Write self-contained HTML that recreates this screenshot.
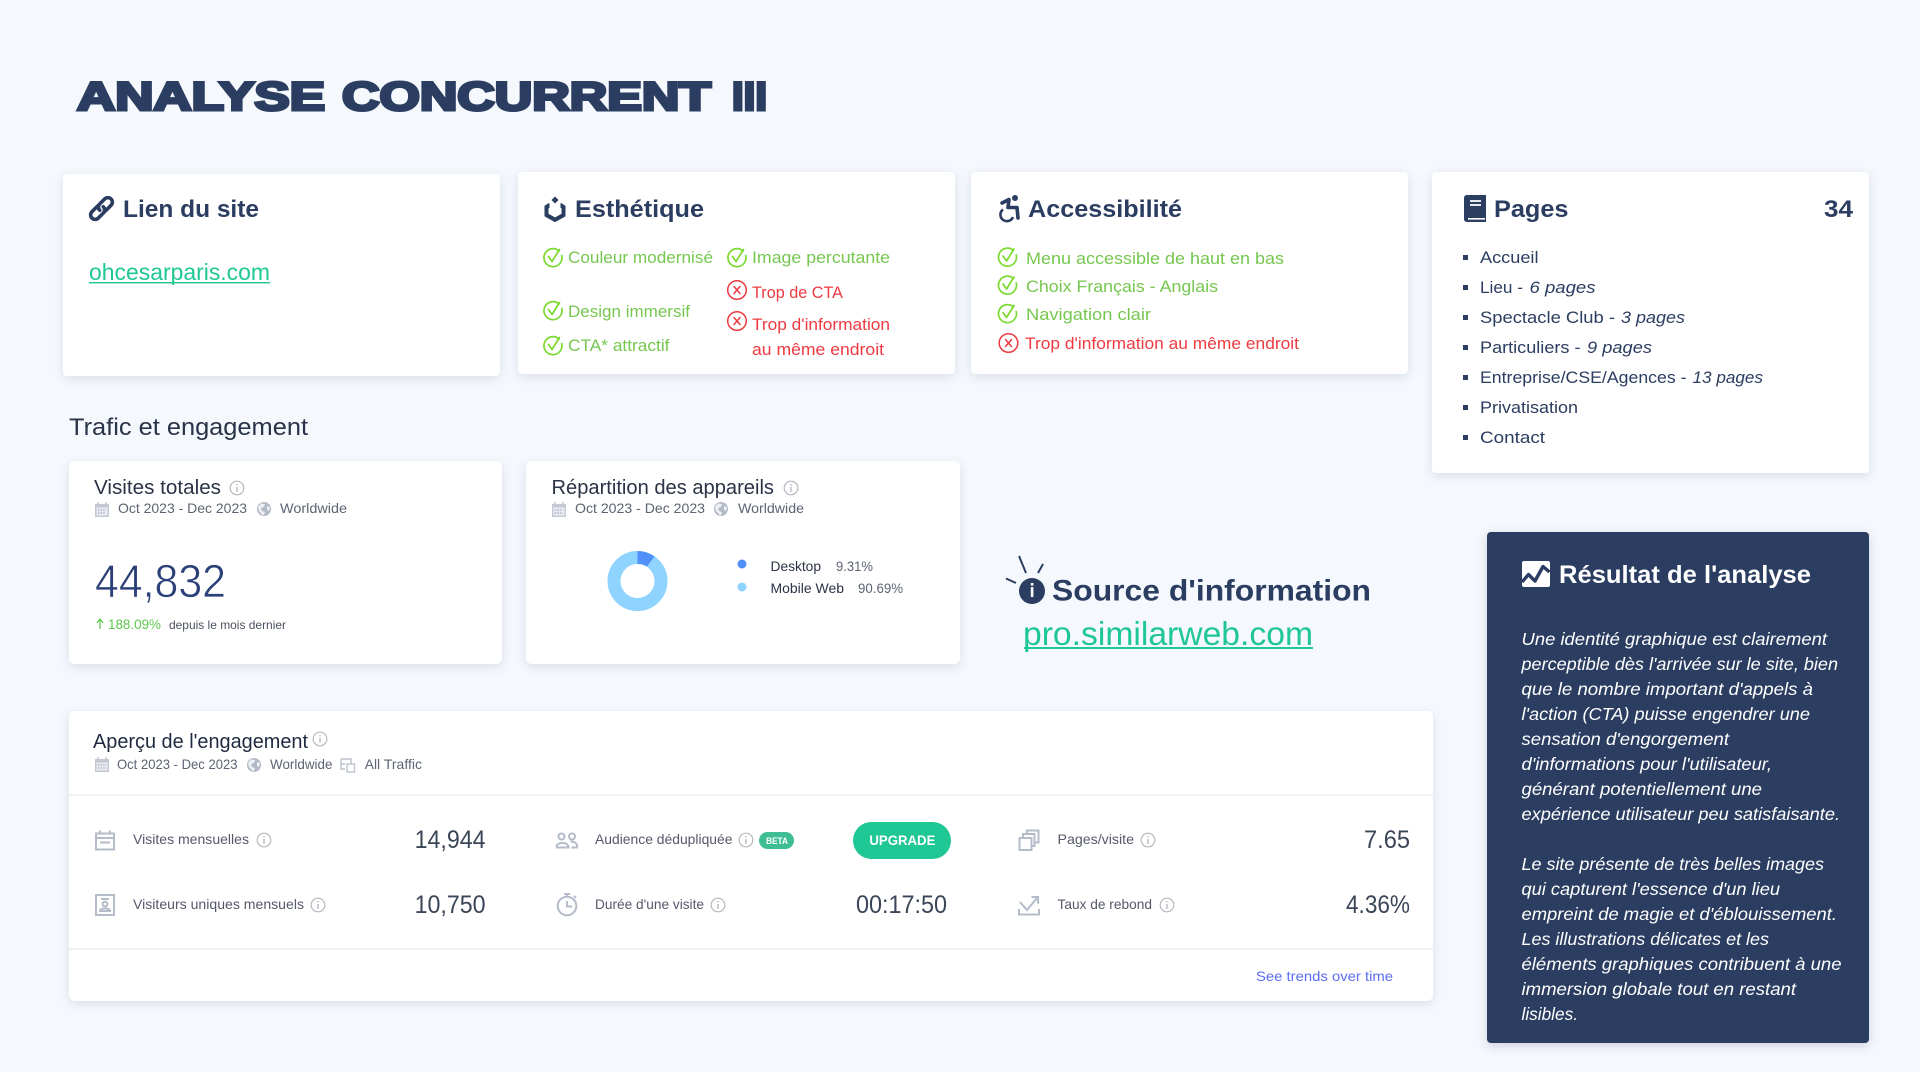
<!DOCTYPE html>
<html lang="fr">
<head>
<meta charset="utf-8">
<title>Analyse concurrent III</title>
<style>
html,body{margin:0;padding:0;background:#f5f8fd;width:1920px;height:1072px;overflow:hidden}
svg{display:block}
text{font-family:"Liberation Sans",sans-serif;white-space:pre}
.card{fill:#fff;filter:drop-shadow(0 3px 5px rgba(40,60,100,.13))}
.h{font-size:24px;font-weight:700;fill:#2b3d60}
.g{font-size:17px;fill:#76c750}
.r{font-size:17px;fill:#ee3a41}
.p{font-size:17px;fill:#2b3d60}
.pi{font-size:17px;fill:#2b3d60;font-style:italic}
.w{font-size:17.5px;fill:#fff;font-style:italic}
.t{font-size:20px;fill:#2b3346}
.s{font-size:14px;fill:#5d6472}
.l{font-size:14px;fill:#55596a}
.n{font-size:25px;fill:#3a4657}
.ti{font-size:40px;font-weight:700;fill:#2b3d60;stroke:#2b3d60;stroke-width:3px}
</style>
</head>
<body>
<svg width="1920" height="1072" viewBox="0 0 1920 1072" xmlns="http://www.w3.org/2000/svg">
<defs>
<g id="ck" fill="none" stroke="#7bd92f" stroke-width="1.7" stroke-linecap="round" stroke-linejoin="round">
<path d="M6 -7A9 9 0 1 0 8.7 -2.5"/>
<path d="M-4.5 -1.5L-1 3.5L6.5 -8.5"/>
</g>
<g id="xx" fill="none" stroke="#ee3a41" stroke-width="1.5" stroke-linecap="round">
<circle r="9.3"/>
<path d="M-3 -3.5L3 3.5M3 -3.5L-3 3.5"/>
</g>
<g id="inf" fill="none" stroke="#b5b8be" stroke-width="1.2">
<circle r="6.8"/>
<path d="M0 -1V4" stroke-width="1.4"/>
<path d="M0 -4V-2.6" stroke-width="1.4"/>
</g>
<g id="cal">
<path d="M0 2H14V15H0Z" fill="#c4c9d4"/>
<path d="M3 0V3M11 0V3" stroke="#c4c9d4" stroke-width="1.6"/>
<path d="M1.5 5.5H12.5V13.5H1.5Z" fill="#e9ebf0"/>
<path d="M3 8H11M3 11H11" stroke="#a5abb8" stroke-width="1.2" stroke-dasharray="1.4 1.2"/>
</g>
<g id="glb">
<circle r="7" fill="#b3bac7"/>
<path d="M-3 -5.5L1 -5L0 -2L-3 -1L-2 2L1 3L0 6L-1 6.5L-5 2L-6 -2Z" fill="#eef0f4"/>
<path d="M3 -3L6 -2L5 2L3 1Z" fill="#eef0f4"/>
</g>
</defs>

<rect width="1920" height="1072" fill="#f5f8fd"/>

<text class="ti" x="77" y="110" textLength="248" lengthAdjust="spacingAndGlyphs">ANALYSE</text>
<text class="ti" x="342" y="110" textLength="369" lengthAdjust="spacingAndGlyphs">CONCURRENT</text>
<text class="ti" x="732" y="110" textLength="35" lengthAdjust="spacingAndGlyphs">III</text>

<!-- Lien du site -->
<rect class="card" x="63" y="174" width="437" height="202" rx="4"/>
<g fill="none" stroke="#2b3d60" stroke-width="3.6" stroke-linecap="round">
<path transform="translate(101.5 208.5) rotate(-45)" d="M1 4.5H9A4.5 4.5 0 0 0 9 -4.5H2A4.5 4.5 0 0 0 -2.5 0"/>
<path transform="translate(101.5 208.5) rotate(135)" d="M1 4.5H9A4.5 4.5 0 0 0 9 -4.5H2A4.5 4.5 0 0 0 -2.5 0"/>
</g>
<text class="h" x="123" y="217" textLength="136" lengthAdjust="spacingAndGlyphs">Lien du site</text>
<text x="89" y="280" font-size="23" fill="#1fc794" textLength="181" lengthAdjust="spacingAndGlyphs">ohcesarparis.com</text>
<rect x="89" y="282" width="181" height="1.4" fill="#1fc794"/>

<!-- Esthétique -->
<rect class="card" x="518" y="172" width="437" height="202" rx="4"/>
<path d="M549 203.5L545 206V216L555 221.5L565 216V206L561 203.5L561 207.5L562 208V214L555 218L548 214V208L549 207.5Z" fill="#2b3d60" stroke="#2b3d60" stroke-width="1" stroke-linejoin="round"/>
<path d="M555 196.5L558.5 200L555 203.5L551.5 200Z" fill="#2b3d60"/>
<text class="h" x="575" y="217" textLength="129" lengthAdjust="spacingAndGlyphs">Esthétique</text>
<use href="#ck" x="553" y="258"/>
<text class="g" x="568" y="263" textLength="145" lengthAdjust="spacingAndGlyphs">Couleur modernisé</text>
<use href="#ck" x="737" y="258"/>
<text class="g" x="752" y="263" textLength="138" lengthAdjust="spacingAndGlyphs">Image percutante</text>
<use href="#ck" x="553" y="311"/>
<text class="g" x="568" y="317" textLength="122" lengthAdjust="spacingAndGlyphs">Design immersif</text>
<use href="#ck" x="553" y="346"/>
<text class="g" x="568" y="351" textLength="101.5" lengthAdjust="spacingAndGlyphs">CTA* attractif</text>
<use href="#xx" x="737" y="290"/>
<text class="r" x="752" y="298" textLength="91" lengthAdjust="spacingAndGlyphs">Trop de CTA</text>
<use href="#xx" x="737" y="321"/>
<text class="r" x="752" y="330" textLength="138" lengthAdjust="spacingAndGlyphs">Trop d'information</text>
<text class="r" x="752" y="355" textLength="132" lengthAdjust="spacingAndGlyphs">au même endroit</text>

<!-- Accessibilité -->
<rect class="card" x="971" y="172" width="437" height="202" rx="4"/>
<circle cx="1015" cy="198" r="3" fill="#2b3d60"/>
<path d="M1002 203L1009 199.5L1008 207.5H1017L1018 218" fill="none" stroke="#2b3d60" stroke-width="3.6" stroke-linejoin="round" stroke-linecap="round"/>
<path d="M1003 209.5A6.5 6.500 0 1 0 1013 217" fill="none" stroke="#2b3d60" stroke-width="2.6"/>
<text class="h" x="1028" y="217" textLength="154" lengthAdjust="spacingAndGlyphs">Accessibilité</text>
<use href="#ck" x="1007.5" y="257.5"/>
<text class="g" x="1026" y="264" textLength="258" lengthAdjust="spacingAndGlyphs">Menu accessible de haut en bas</text>
<use href="#ck" x="1007.5" y="285.5"/>
<text class="g" x="1026" y="292" textLength="192" lengthAdjust="spacingAndGlyphs">Choix Français - Anglais</text>
<use href="#ck" x="1007.5" y="314"/>
<text class="g" x="1026" y="320" textLength="125" lengthAdjust="spacingAndGlyphs">Navigation clair</text>
<use href="#xx" x="1008.5" y="343"/>
<text class="r" x="1025" y="349" textLength="274" lengthAdjust="spacingAndGlyphs">Trop d'information au même endroit</text>

<!-- Pages -->
<rect class="card" x="1432" y="172" width="437" height="301" rx="4"/>
<path d="M1467 195H1486V222H1467C1465 222 1464 220.5 1464 219V198C1464 196.5 1465 195 1467 195Z" fill="#2b3d60"/>
<path d="M1468 218.8H1485" stroke="#fff" stroke-width="1.6"/>
<path d="M1470 201H1481M1470 205H1481" stroke="#fff" stroke-width="1.8"/>
<text class="h" x="1494" y="217" textLength="74.5" lengthAdjust="spacingAndGlyphs">Pages</text>
<text class="h" x="1824" y="217" textLength="29" lengthAdjust="spacingAndGlyphs">34</text>
<g fill="#2b3d60">
<rect x="1463" y="255" width="5" height="5"/>
<rect x="1463" y="285" width="5" height="5"/>
<rect x="1463" y="315" width="5" height="5"/>
<rect x="1463" y="345" width="5" height="5"/>
<rect x="1463" y="375" width="5" height="5"/>
<rect x="1463" y="405" width="5" height="5"/>
<rect x="1463" y="435" width="5" height="5"/>
</g>
<text class="p" x="1480" y="263" textLength="58.5" lengthAdjust="spacingAndGlyphs">Accueil</text>
<text class="p" x="1480" y="293" textLength="43" lengthAdjust="spacingAndGlyphs">Lieu -</text>
<text class="pi" x="1529.5" y="293" textLength="66" lengthAdjust="spacingAndGlyphs">6 pages</text>
<text class="p" x="1480" y="323" textLength="135" lengthAdjust="spacingAndGlyphs">Spectacle Club -</text>
<text class="pi" x="1621" y="323" textLength="64" lengthAdjust="spacingAndGlyphs">3 pages</text>
<text class="p" x="1480" y="353" textLength="100.5" lengthAdjust="spacingAndGlyphs">Particuliers -</text>
<text class="pi" x="1587" y="353" textLength="65" lengthAdjust="spacingAndGlyphs">9 pages</text>
<text class="p" x="1480" y="383" textLength="206.5" lengthAdjust="spacingAndGlyphs">Entreprise/CSE/Agences -</text>
<text class="pi" x="1692.5" y="383" textLength="70.5" lengthAdjust="spacingAndGlyphs">13 pages</text>
<text class="p" x="1480" y="413" textLength="98" lengthAdjust="spacingAndGlyphs">Privatisation</text>
<text class="p" x="1480" y="443" textLength="65" lengthAdjust="spacingAndGlyphs">Contact</text>

<!-- Trafic -->
<text x="69" y="435" font-size="24" fill="#2a3347" textLength="239" lengthAdjust="spacingAndGlyphs">Trafic et engagement</text>

<rect class="card" x="69" y="461" width="433" height="203" rx="6"/>
<text class="t" x="94" y="494" textLength="127" lengthAdjust="spacingAndGlyphs">Visites totales</text>
<use href="#inf" x="237" y="488"/>
<use href="#cal" x="95" y="502"/>
<text class="s" x="118" y="513" textLength="129" lengthAdjust="spacingAndGlyphs">Oct 2023 - Dec 2023</text>
<use href="#glb" x="264" y="509"/>
<text class="s" x="280" y="513" textLength="67" lengthAdjust="spacingAndGlyphs">Worldwide</text>
<text x="95" y="597" font-size="46" fill="#2b4078" stroke="#fff" stroke-width=".7" textLength="131" lengthAdjust="spacingAndGlyphs">44,832</text>
<path d="M100 629V620M96.8 623L100 619L103.2 623" fill="none" stroke="#5cc84c" stroke-width="1.2"/>
<text x="108" y="629" font-size="14" fill="#5cc84c" textLength="53" lengthAdjust="spacingAndGlyphs">188.09%</text>
<text x="169" y="629" font-size="12" fill="#4b5160" textLength="117" lengthAdjust="spacingAndGlyphs">depuis le mois dernier</text>

<rect class="card" x="526" y="461" width="434" height="203" rx="6"/>
<text class="t" x="551.5" y="494" textLength="222.5" lengthAdjust="spacingAndGlyphs">Répartition des appareils</text>
<use href="#inf" x="791" y="488"/>
<use href="#cal" x="552" y="502"/>
<text class="s" x="575" y="513" textLength="130" lengthAdjust="spacingAndGlyphs">Oct 2023 - Dec 2023</text>
<use href="#glb" x="721" y="509"/>
<text class="s" x="738" y="513" textLength="66" lengthAdjust="spacingAndGlyphs">Worldwide</text>
<circle cx="637.5" cy="581" r="23.5" fill="none" stroke="#8fd3ff" stroke-width="13"/>
<path d="M637.5 551A30 30 0 0 1 654.5 556.5L647 566.5A17 17 0 0 0 637.5 564Z" fill="#5190f9"/>
<circle cx="742" cy="564" r="4.500" fill="#5190f9"/>
<circle cx="742" cy="587" r="4.500" fill="#8fd3ff"/>
<text x="770.5" y="571" font-size="14" fill="#2b3346" textLength="50.5" lengthAdjust="spacingAndGlyphs">Desktop</text>
<text class="s" x="836" y="571" textLength="37" lengthAdjust="spacingAndGlyphs">9.31%</text>
<text x="770.5" y="593" font-size="14" fill="#2b3346" textLength="73.5" lengthAdjust="spacingAndGlyphs">Mobile Web</text>
<text class="s" x="858" y="593" textLength="45" lengthAdjust="spacingAndGlyphs">90.69%</text>

<!-- Source -->
<circle cx="1032" cy="591" r="13" fill="#2b3d60"/>
<rect x="1030.8" y="587" width="2.6" height="10" fill="#fff"/>
<rect x="1030.8" y="583" width="2.6" height="2.6" fill="#fff"/>
<path d="M1019 556L1026 573M1043 564L1038 573M1006 578.5L1016 583" stroke="#2b3d60" stroke-width="2" fill="none"/>
<text x="1052" y="600.5" font-size="30" font-weight="700" fill="#2b3d60" textLength="319" lengthAdjust="spacingAndGlyphs">Source d'information</text>
<text x="1023" y="645" font-size="33" fill="#1fc794" textLength="290" lengthAdjust="spacingAndGlyphs">pro.similarweb.com</text>
<rect x="1024" y="647" width="289" height="2" fill="#1fc794"/>

<!-- Résultat -->
<rect x="1487" y="532" width="382" height="511" rx="4" fill="#2b3d60" style="filter:drop-shadow(0 3px 5px rgba(40,60,100,.2))"/>
<rect x="1522" y="561" width="28" height="26" rx="2" fill="#fff"/>
<path d="M1522 582L1528.5 574.500L1535 581L1543 566.500L1549.500 572" fill="none" stroke="#2b3d60" stroke-width="3.400" stroke-linejoin="round"/>
<text x="1559" y="583" font-size="25" font-weight="700" fill="#fff" textLength="252" lengthAdjust="spacingAndGlyphs">Résultat de l'analyse</text>
<text class="w" x="1521.5" y="645" textLength="305.5" lengthAdjust="spacingAndGlyphs">Une identité graphique est clairement</text>
<text class="w" x="1521.5" y="670" textLength="316.5" lengthAdjust="spacingAndGlyphs">perceptible dès l'arrivée sur le site, bien</text>
<text class="w" x="1521.5" y="695" textLength="291.5" lengthAdjust="spacingAndGlyphs">que le nombre important d'appels à</text>
<text class="w" x="1521.5" y="720" textLength="288.5" lengthAdjust="spacingAndGlyphs">l'action (CTA) puisse engendrer une</text>
<text class="w" x="1521.5" y="745" textLength="207.5" lengthAdjust="spacingAndGlyphs">sensation d'engorgement</text>
<text class="w" x="1521.5" y="770" textLength="250.5" lengthAdjust="spacingAndGlyphs">d'informations pour l'utilisateur,</text>
<text class="w" x="1521.5" y="795" textLength="240.5" lengthAdjust="spacingAndGlyphs">générant potentiellement une</text>
<text class="w" x="1521.5" y="820" textLength="318.5" lengthAdjust="spacingAndGlyphs">expérience utilisateur peu satisfaisante.</text>
<text class="w" x="1521.5" y="870" textLength="302.5" lengthAdjust="spacingAndGlyphs">Le site présente de très belles images</text>
<text class="w" x="1521.5" y="895" textLength="258.5" lengthAdjust="spacingAndGlyphs">qui capturent l'essence d'un lieu</text>
<text class="w" x="1521.5" y="920" textLength="315.5" lengthAdjust="spacingAndGlyphs">empreint de magie et d'éblouissement.</text>
<text class="w" x="1521.5" y="945" textLength="247.5" lengthAdjust="spacingAndGlyphs">Les illustrations délicates et les</text>
<text class="w" x="1521.5" y="970" textLength="320" lengthAdjust="spacingAndGlyphs">éléments graphiques contribuent à une</text>
<text class="w" x="1521.5" y="995" textLength="274.5" lengthAdjust="spacingAndGlyphs">immersion globale tout en restant</text>
<text class="w" x="1521.5" y="1020" textLength="56.5" lengthAdjust="spacingAndGlyphs">lisibles.</text>

<!-- Engagement -->
<rect class="card" x="69" y="711" width="1364" height="290" rx="6"/>
<text x="93" y="748" font-size="20" fill="#1f2a40" textLength="215" lengthAdjust="spacingAndGlyphs">Aperçu de l'engagement</text>
<use href="#inf" x="320" y="739"/>
<use href="#cal" x="95" y="757"/>
<text class="s" x="117" y="769" textLength="120.5" lengthAdjust="spacingAndGlyphs">Oct 2023 - Dec 2023</text>
<use href="#glb" x="254" y="765"/>
<text class="s" x="270" y="769" textLength="62.5" lengthAdjust="spacingAndGlyphs">Worldwide</text>
<path d="M341 759H351V764M341 759V769H345M341 764H345" fill="none" stroke="#bcc2ce" stroke-width="1.4"/>
<rect x="347" y="764" width="7.5" height="8" fill="none" stroke="#bcc2ce" stroke-width="1.4"/>
<text class="s" x="364.6" y="769" textLength="57.4" lengthAdjust="spacingAndGlyphs">All Traffic</text>
<rect x="69" y="794.5" width="1364" height="1.2" fill="#e6e8ec"/>
<rect x="69" y="948.5" width="1364" height="1.2" fill="#e6e8ec"/>

<!-- row icons -->
<g fill="none" stroke="#b4bbc9" stroke-width="2">
<path d="M96 833.5H114V849.5H96ZM96 838H114M100 830.5V834M110 830.5V834M100 842.5H110"/>
<path d="M96 895H114V915H96ZM101 899H109"/>
<circle cx="105" cy="904" r="2.4"/>
<path d="M100 911C100 907.5 110 907.5 110 911Z"/>
<circle cx="561.5" cy="836.5" r="3"/>
<circle cx="572" cy="836.5" r="3"/>
<path d="M557 847.5C554 843 568 840 568.5 847.5ZM570.5 841.5C575 841.5 578 844 577 847.5H571.5"/>
<circle cx="567" cy="906" r="9.3"/>
<path d="M567 901V906.5H572M564 894H570M567 894V896.5M574 896L576 898"/>
<path d="M1019.5 838H1031.5V850H1019.5Z"/>
<path d="M1023 838V834H1034.5V846H1031.5"/>
<path d="M1027 834V830.5H1038.5V842.5H1034.5"/>
<path d="M1020 902L1027 910L1037 898M1031.5 897H1038V903.5M1019 909V914.5H1039V909"/>
</g>

<text class="l" x="133" y="844" textLength="116" lengthAdjust="spacingAndGlyphs">Visites mensuelles</text>
<use href="#inf" x="264" y="840"/>
<text class="n" x="414.6" y="848" textLength="71" lengthAdjust="spacingAndGlyphs">14,944</text>
<text class="l" x="133" y="909" textLength="171" lengthAdjust="spacingAndGlyphs">Visiteurs uniques mensuels</text>
<use href="#inf" x="318" y="905"/>
<text class="n" x="414.6" y="913" textLength="71" lengthAdjust="spacingAndGlyphs">10,750</text>

<text class="l" x="595" y="844" textLength="137.5" lengthAdjust="spacingAndGlyphs">Audience dédupliquée</text>
<use href="#inf" x="746" y="840"/>
<rect x="759" y="832" width="35" height="17" rx="8.5" fill="#3fbe95"/>
<text x="766" y="844" font-size="9.5" font-weight="700" fill="#fff" textLength="22" lengthAdjust="spacingAndGlyphs">BETA</text>
<text class="l" x="595" y="909" textLength="109" lengthAdjust="spacingAndGlyphs">Durée d'une visite</text>
<use href="#inf" x="718" y="905"/>

<rect x="853" y="822" width="98" height="37" rx="18.5" fill="#1fc794"/>
<text x="869.4" y="845" font-size="14" font-weight="700" fill="#fff" textLength="66" lengthAdjust="spacingAndGlyphs">UPGRADE</text>
<text class="n" x="856" y="913" textLength="91" lengthAdjust="spacingAndGlyphs">00:17:50</text>

<text class="l" x="1057.5" y="844" textLength="76.5" lengthAdjust="spacingAndGlyphs">Pages/visite</text>
<use href="#inf" x="1148" y="840"/>
<text class="n" x="1364" y="848" textLength="46" lengthAdjust="spacingAndGlyphs">7.65</text>
<text class="l" x="1057.5" y="909" textLength="94.5" lengthAdjust="spacingAndGlyphs">Taux de rebond</text>
<use href="#inf" x="1167" y="905"/>
<text class="n" x="1346" y="913" textLength="64" lengthAdjust="spacingAndGlyphs">4.36%</text>

<text x="1256" y="981" font-size="14" fill="#5b6ef5" textLength="137" lengthAdjust="spacingAndGlyphs">See trends over time</text>
</svg>
</body>
</html>
